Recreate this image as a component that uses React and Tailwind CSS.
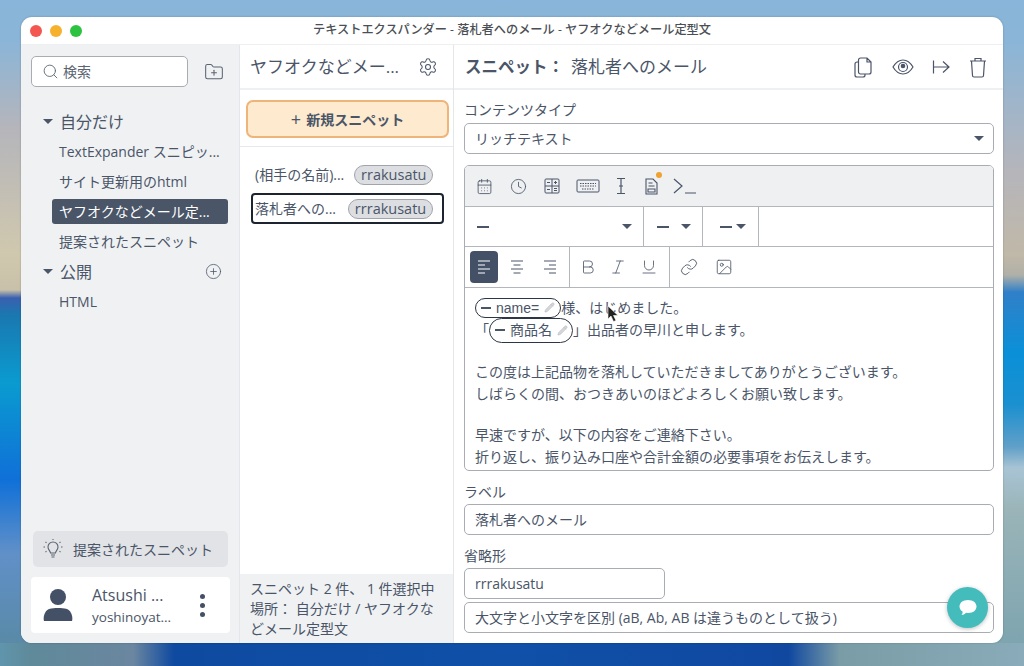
import React from "react";
import { Search, FolderPlus, Settings, CirclePlus, CalendarDays, Clock, Bold, Italic, Underline, Link, Image, Pencil } from "lucide-react";

const font = "font-['Open_Sans','Noto_Sans_CJK_JP',sans-serif]";

function Tri({ className = "" }) {
  return <span className={"inline-block w-0 h-0 border-l-[5px] border-r-[5px] border-t-[5px] border-l-transparent border-r-transparent border-t-[#4a5568] " + className} />;
}

function TreeItem({ children, active }) {
  return (
    <div className={"ml-[31px] mr-[11px] h-[25px] flex items-center pl-[7px] rounded-[3px] text-[14px] whitespace-nowrap overflow-hidden " + (active ? "bg-[#4a5568] text-white" : "text-[#4a5568]")}>
      {children}
    </div>
  );
}

function Badge({ children, w }) {
  return <span className={"h-[20px] rounded-full bg-[#dcdee2] border border-[#a0a4ab] flex items-center justify-center text-[14.5px] text-[#4a5568] " + w}>{children}</span>;
}

function Dash({ className = "" }) {
  return <span className={"block w-[12px] h-[2px] bg-[#4a5568] " + className} />;
}

function Chip({ children, className }) {
  return (
    <span className={"inline-flex items-center border border-[#2d3644] rounded-full " + className}>
      <span className="block w-[10px] h-[2px] bg-[#4a5568] mr-[5px]" />
      <span>{children}</span>
      <Pencil size={11} strokeWidth={1.25} className="ml-[5px] text-[#b6b9be] fill-[#d5d7da]" />
    </span>
  );
}

function AlignIcon({ d, color = "#4a5568" }) {
  return (
    <svg width="18" height="16" viewBox="0 0 18 16" fill="none" stroke={color} strokeWidth="1.1">
      <path d={d} />
    </svg>
  );
}

export default function App() {
  return (
    <div className={"w-[1024px] h-[666px] overflow-hidden flex flex-col [background:linear-gradient(180deg,#88b5d9_0px,#8ab5d8_40px,#b5b5bb_128px,#d0c8ae_255px,#c8c0a8_290px,#3a60b0_298px,#1a78b0_315px,#0a9bd0_383px,#1070d8_480px,#6090c8_553px,#5a8aa8_640px)_left/50%_100%_no-repeat,linear-gradient(180deg,#88b5d9_0px,#8ab5d8_40px,#b5b5bb_170px,#c0b8a8_255px,#b0b0a8_275px,#3080c8_292px,#0a90d8_353px,#1a90d0_404px,#60a0c8_447px,#a8c4d4_468px,#9ab4b8_510px,#7fa5b0_640px)_right/50%_100%_no-repeat] " + font}>
      <div className="pt-[17px] pl-[21px]">
        <div className="relative w-[982px] h-[626px] rounded-[11px] overflow-hidden bg-white flex flex-col text-[#4a5568] shadow-[0_0_2px_rgba(0,0,0,0.25)]">
          {/* title bar */}
          <div className="relative h-[28px] shrink-0 flex items-center justify-center border-b border-[#eeeff1]">
            <div className="absolute left-[9px] top-[8px] flex gap-[8px]">
              <span className="w-[12px] h-[12px] rounded-full bg-[#f4574f]" />
              <span className="w-[12px] h-[12px] rounded-full bg-[#f6b12d]" />
              <span className="w-[12px] h-[12px] rounded-full bg-[#2dc240]" />
            </div>
            <span className="text-[12.2px] font-medium text-[#4b4f55]">テキストエクスパンダー - 落札者へのメール - ヤフオクなどメール定型文</span>
          </div>
          <div className="flex-1 flex min-h-0">
            {/* sidebar */}
            <div className="w-[219px] shrink-0 bg-[#eff1f3] flex flex-col border-r border-[#e4e6e9]">
              <div className="flex items-center pl-[10px] pt-[11px]">
                <div className="w-[157px] h-[31px] bg-white border border-[#a9adb3] rounded-[5px] flex items-center pl-[10px]">
                  <Search size={17} strokeWidth={1.25} className="text-[#5b6470]" />
                  <span className="ml-[4px] text-[14px] text-[#5b6470]">検索</span>
                </div>
                <FolderPlus size={20} strokeWidth={1.25} className="ml-[16px] text-[#5b6470]" />
              </div>
              <div className="mt-[22px] h-[25px] flex items-center pl-[22px] text-[16px]">
                <Tri /><span className="ml-[7px]">自分だけ</span>
              </div>
              <div className="mt-[5px] flex flex-col gap-[5px]">
                <TreeItem>TextExpander スニピッ...</TreeItem>
                <TreeItem>サイト更新用のhtml</TreeItem>
                <TreeItem active>ヤフオクなどメール定...</TreeItem>
                <TreeItem>提案されたスニペット</TreeItem>
              </div>
              <div className="mt-[5px] h-[25px] flex items-center pl-[22px] pr-[17px] text-[16px]">
                <Tri /><span className="ml-[7px] flex-1">公開</span>
                <CirclePlus size={17} strokeWidth={1.1} className="text-[#4a5568]" />
              </div>
              <div className="mt-[5px]"><TreeItem>HTML</TreeItem></div>
              <div className="flex-1" />
              <div className="mx-[12px] w-[195px] h-[36px] rounded-[5px] bg-[#e1e3e6] flex items-center pl-[9px] text-[14px]">
                <svg width="22" height="22" viewBox="0 0 22 22" fill="none" stroke="#5b6470" strokeWidth="1.1">
                  <path d="M8.500 15c0-2-2.500-3-2.500-6a5 5 0 0 1 10 0c0 3-2.500 4-2.500 6zM9 17h4M9.500 19h3" />
                  <path d="M11 1v1M3.500 4l1 .7M18.500 4l-1 .7M1.500 9h1.500M19 9h1.500M3.500 14l1-.7M18.500 14l-1-.7" />
                </svg>
                <span className="ml-[9px]">提案されたスニペット</span>
              </div>
              <div className="mx-[10px] mt-[10px] mb-[10px] w-[199px] h-[56px] rounded-[4px] bg-white flex items-center pl-[12px]">
                <svg width="30" height="34" viewBox="0 0 30 34" fill="#445066">
                  <circle cx="15" cy="9" r="8" />
                  <path d="M1 33c-1-3 0-10 5-12 3-1 6-1 9-1s6 0 9 1c5 2 6 9 5 12z" />
                </svg>
                <div className="ml-[19px] w-[88px] flex flex-col leading-[20px]">
                  <span className="text-[16px] whitespace-nowrap leading-[24px]">Atsushi ...</span>
                  <span className="text-[13.5px] whitespace-nowrap">yoshinoyat...</span>
                </div>
                <span className="ml-[20px] flex flex-col gap-[4px]">
                  <span className="w-[5px] h-[5px] rounded-full bg-[#445066]" />
                  <span className="w-[5px] h-[5px] rounded-full bg-[#445066]" />
                  <span className="w-[5px] h-[5px] rounded-full bg-[#445066]" />
                </span>
              </div>
            </div>
            {/* middle */}
            <div className="w-[214px] shrink-0 flex flex-col border-r border-[#e4e6e9]">
              <div className="h-[45px] shrink-0 flex items-center justify-between pl-[10px] pr-[15px] border-b-2 border-[#eff0f2]">
                <span className="text-[17px] whitespace-nowrap">ヤフオクなどメー...</span>
                <Settings size={20} strokeWidth={1.25} />
              </div>
              <div className="h-[57px] shrink-0 border-b border-[#e8e9ec] pt-[10px] pl-[6px]">
                <div className="w-[203px] h-[38px] rounded-[7px] bg-[#fdeacf] border-2 border-[#eeb478] flex items-center justify-center text-[14px] font-bold">
                  <span className="font-normal text-[18px] mr-[5px] leading-none">+</span>新規スニペット
                </div>
              </div>
              <div className="h-[37px] mt-[9px] flex items-center pl-[15px] text-[14px] whitespace-nowrap">
                <span>(相手の名前)...</span>
                <Badge w="ml-[10px] w-[79px]">rrakusatu</Badge>
              </div>
              <div className="ml-[11px] h-[31px] w-[193px] rounded-[4px] border-2 border-[#1c2430] flex items-center pl-[2px] text-[14px] whitespace-nowrap">
                <span>落札者への...</span>
                <Badge w="ml-[12px] w-[85px]">rrrakusatu</Badge>
              </div>
              <div className="flex-1" />
              <div className="h-[69px] shrink-0 bg-[#eff1f3] pl-[10px] pr-[12px] pt-[5px] text-[14px] leading-[20px] whitespace-nowrap">
                スニペット 2 件、 1 件選択中<br />場所： 自分だけ / ヤフオクな<br />どメール定型文
              </div>
            </div>
            {/* right */}
            <div className="flex-1 min-w-0 flex flex-col">
              <div className="h-[45px] shrink-0 flex items-center pl-[11px] pr-[16px] pt-[1px] border-b-2 border-[#eff0f2] text-[17px]">
                <span className="font-bold text-[16.5px]">スニペット：</span>
                <span className="ml-[7px]">落札者へのメール</span>
                <div className="flex-1" />
                <svg width="18" height="21" viewBox="0 0 18 21" fill="none" stroke="#4a5568" strokeWidth="1.2" className="mr-[20px]">
                  <path d="M4.500 5H3a2 2 0 0 0-2 2v11a2 2 0 0 0 2 2h6a2 2 0 0 0 2-2v-1" />
                  <path d="M6.500 1H13l4 4v10a2 2 0 0 1-2 2H6.500a2 2 0 0 1-2-2V3a2 2 0 0 1 2-2zM13 1v4h4" />
                </svg>
                <svg width="22" height="16" viewBox="0 0 22 16" fill="none" stroke="#4a5568" strokeWidth="1.2" className="mr-[18px]">
                  <path d="M1 8c3-5 6-7 10-7s7 2 10 7c-3 5-6 7-10 7S4 13 1 8z" />
                  <circle cx="11" cy="8" r="4.500" />
                  <circle cx="11" cy="7" r="2.300" fill="#4a5568" stroke="none" />
                </svg>
                <svg width="18" height="16" viewBox="0 0 18 16" fill="none" stroke="#4a5568" strokeWidth="1.2" className="mr-[19px]">
                  <path d="M1.500 1.500v13M2 8h15M11 2.500 17 8l-6 5.500" />
                </svg>
                <svg width="18" height="21" viewBox="0 0 18 21" fill="none" stroke="#4a5568" strokeWidth="1.2">
                  <path d="M1 4h16M6 4V1.500h6V4M2.500 4l1 14.500a1.500 1.500 0 0 0 1.500 1.500h8a1.500 1.500 0 0 0 1.500-1.500L15.500 4" />
                </svg>
              </div>
              <div className="flex-1 min-h-0 pl-[10px] pr-[9px] text-[14px]">
                <div className="h-[20px] mt-[10px] leading-[20px]">コンテンツタイプ</div>
                <div className="h-[31px] mt-[3px] border border-[#a9adb3] rounded-[5px] flex items-center pl-[10px] pr-[9px]">
                  <span className="flex-1">リッチテキスト</span>
                  <Tri />
                </div>
                <div className="mt-[11px] h-[306px] border border-[#a9adb3] rounded-[5px] flex flex-col overflow-hidden">
                  <div className="h-[41px] shrink-0 bg-[#eff0f2] border-b border-[#b3b6bb] flex items-center pl-[11px]">
                    <CalendarDays size={17} strokeWidth={1.2} />
                    <Clock size={17} strokeWidth={1.2} className="ml-[17px]" />
                    <svg width="16" height="16" viewBox="0 0 16 16" fill="none" stroke="#4a5568" strokeWidth="1" className="ml-[17px]">
                      <rect x="1" y="1" width="14" height="14" rx="1" />
                      <path d="M8 1v14M1 8h14M3 4.500h3M10 4.500h3M11.500 3v3M3 11.500h3M10 10.500h3M10 12.500h3" />
                    </svg>
                    <svg width="24" height="14" viewBox="0 0 24 14" fill="none" stroke="#4a5568" strokeWidth="1" className="ml-[16px]">
                      <rect x="1" y="1" width="22" height="12" rx="1" />
                      <path d="M4 4.500h16M4 7h16M6 10h12" strokeDasharray="1.500 1" />
                    </svg>
                    <svg width="10" height="18" viewBox="0 0 10 18" fill="none" stroke="#4a5568" strokeWidth="1.2" className="ml-[16px]">
                      <path d="M1 1.500h8M1 16.500h8M5 1.500v15M3 9h4" />
                    </svg>
                    <span className="relative ml-[19px] block">
                      <svg width="13" height="17" viewBox="0 0 13 17" fill="none" stroke="#4a5568" strokeWidth="1.1" className="block">
                        <path d="M1 1h7l4 4v11H1zM3.500 5h4M3.500 8h6M3 11h7v3H3z" />
                      </svg>
                      <span className="absolute -top-[6px] left-[11px] w-[6px] h-[6px] rounded-full bg-[#efa232]" />
                    </span>
                    <svg width="24" height="16" viewBox="0 0 24 16" fill="none" stroke="#4a5568" strokeWidth="1.2" className="ml-[15px]">
                      <path d="M1 1l8 7-8 7M12 15h11" />
                    </svg>
                  </div>
                  <div className="h-[40px] shrink-0 border-b border-[#b3b6bb] flex items-stretch">
                    <div className="w-[179px] border-r border-[#b3b6bb] flex items-center pl-[12px] pr-[11px]"><Dash /><span className="flex-1" /><Tri /></div>
                    <div className="w-[59px] border-r border-[#b3b6bb] flex items-center pl-[13px] pr-[11px]"><Dash /><span className="flex-1" /><Tri /></div>
                    <div className="w-[56px] border-r border-[#b3b6bb] flex items-center pl-[17px] pr-[12px]"><Dash /><span className="flex-1" /><Tri /></div>
                  </div>
                  <div className="h-[41px] shrink-0 border-b border-[#b3b6bb] flex items-stretch">
                    <div className="w-[105px] border-r border-[#b3b6bb] flex items-center pl-[5px]">
                      <span className="w-[28px] h-[32px] rounded-[4px] bg-[#445066] flex items-center justify-center">
                        <AlignIcon color="#ffffff" d="M3 2h12M3 6h7M3 10h12M3 14h7" />
                      </span>
                      <span className="ml-[10px]"><AlignIcon d="M3 2h12M5.500 6h7M3 10h12M5.500 14h7" /></span>
                      <span className="ml-[15px]"><AlignIcon d="M3 2h12M8 6h7M3 10h12M8 14h7" /></span>
                    </div>
                    <div className="w-[100px] border-r border-[#b3b6bb] flex items-center pl-[9px]">
                      <Bold size={18} strokeWidth={1.1} />
                      <Italic size={18} strokeWidth={1.1} className="ml-[12px]" />
                      <Underline size={18} strokeWidth={1.1} className="ml-[13px]" />
                    </div>
                    <div className="flex items-center pl-[10px]">
                      <Link size={18} strokeWidth={1.2} />
                      <Image size={18} strokeWidth={1.1} className="ml-[17px]" />
                    </div>
                  </div>
                  <div className="relative flex-1 pl-[10px] pt-[9px] leading-[22px] whitespace-nowrap">
                    <div className="h-[21px] flex items-center">
                      <Chip className="h-[20px] px-[5px] text-[14px] font-['Liberation_Sans',sans-serif]">name=</Chip><span>様、はじめました。</span>
                    </div>
                    <div className="h-[24px] flex items-center">
                      <span>「</span><Chip className="h-[25px] pl-[5px] pr-[4px]">商品名</Chip><span>」出品者の早川と申します。</span>
                    </div>
                    <div className="h-[19px]" />
                    <div className="h-[22px]">この度は上記品物を落札していただきましてありがとうございます。</div>
                    <div className="h-[22px]">しばらくの間、おつきあいのほどよろしくお願い致します。</div>
                    <div className="h-[19px]" />
                    <div className="h-[22px]">早速ですが、以下の内容をご連絡下さい。</div>
                    <div className="h-[22px]">折り返し、振り込み口座や合計金額の必要事項をお伝えします。</div>
                    <svg width="12" height="18" viewBox="0 0 12 18" className="absolute left-[142px] top-[17px]">
                      <path d="M1 1v13l3-3 2.500 5.500 2.500-1L6.500 10.500H11z" fill="#222" stroke="#fff" strokeWidth="0.6" />
                    </svg>
                  </div>
                </div>
                <div className="h-[20px] mt-[11px] leading-[20px]">ラベル</div>
                <div className="h-[31px] mt-[2px] border border-[#a9adb3] rounded-[5px] flex items-center pl-[10px]">落札者へのメール</div>
                <div className="h-[20px] mt-[11px] leading-[20px]">省略形</div>
                <div className="h-[31px] w-[201px] mt-[2px] border border-[#a9adb3] rounded-[5px] flex items-center pl-[10px]">rrrakusatu</div>
                <div className="h-[31px] mt-[3px] border border-[#a9adb3] rounded-[5px] flex items-center pl-[10px]">大文字と小文字を区別 (aB, Ab, AB は違うものとして扱う)</div>
              </div>
            </div>
          </div>
          <div className="absolute left-[926px] top-[570px] w-[41px] h-[41px] rounded-full bg-[#45bcbc] shadow-[0_1px_4px_rgba(0,0,0,0.25)] flex items-center justify-center">
            <svg width="18" height="17" viewBox="0 0 18 17" fill="#fff">
              <path d="M9 1c5 0 8.500 2.800 8.500 6.500S14 14 9.500 14c-1 0-1.700-.1-2.500-.3C5.800 15 4 16 2.500 16c.8-1 1.200-2.200 1.200-3.300C1.800 11.500.500 9.700.500 7.500.500 3.800 4 1 9 1z" />
            </svg>
          </div>
        </div>
      </div>
      <div className="w-full flex-1 bg-[linear-gradient(90deg,#5f95ad_0%,#5f8a9a_3%,#6b86a0_13%,#0e4aa0_17%,#1050a8_50%,#1048a0_77%,#7a9ca6_82%,#8aacba_100%)]" />
    </div>
  );
}
